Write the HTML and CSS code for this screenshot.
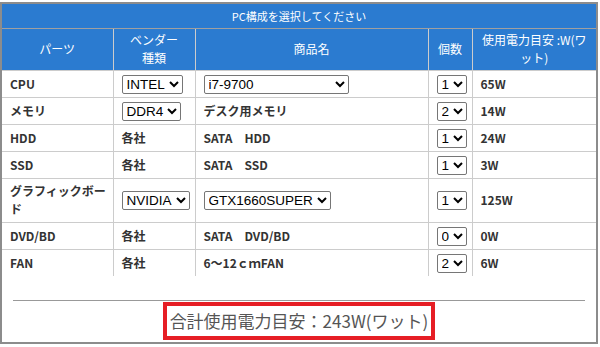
FILE: index.html
```html
<!DOCTYPE html>
<html lang="ja">
<head>
    <meta charset="UTF-8">
    <meta name="viewport" content="width=device-width, initial-scale=1.0">
    <title>PC構成</title>
    <link rel="stylesheet" href="styles.css">
</head>
<body>
    <div class="frame">
        <table class="parts">
            <colgroup>
                <col class="col-part">
                <col class="col-vendor">
                <col class="col-name">
                <col class="col-count">
                <col class="col-watt">
            </colgroup>
            <thead>
                <tr class="caption-row">
                    <th colspan="5" class="caption">PC構成を選択してください</th>
                </tr>
                <tr class="head">
                    <th>パーツ</th>
                    <th>ベンダー<br>種類</th>
                    <th>商品名</th>
                    <th>個数</th>
                    <th>使用電力目安 :W(ワット)</th>
                </tr>
            </thead>
            <tbody>
                <tr>
                    <td>CPU</td>
                    <td><select><option>INTEL</option><option>AMD</option></select></td>
                    <td><select class="sel-cpu"><option>i7-9700</option><option>i5-9400</option></select></td>
                    <td><select><option>1</option><option>2</option></select></td>
                    <td>65W</td>
                </tr>
                <tr>
                    <td>メモリ</td>
                    <td><select><option>DDR4</option><option>DDR3</option></select></td>
                    <td>デスク用メモリ</td>
                    <td><select><option>1</option><option selected>2</option></select></td>
                    <td>14W</td>
                </tr>
                <tr>
                    <td>HDD</td>
                    <td>各社</td>
                    <td>SATA　HDD</td>
                    <td><select><option>1</option><option>2</option></select></td>
                    <td>24W</td>
                </tr>
                <tr>
                    <td>SSD</td>
                    <td>各社</td>
                    <td>SATA　SSD</td>
                    <td><select><option>1</option><option>2</option></select></td>
                    <td>3W</td>
                </tr>
                <tr class="tall">
                    <td>グラフィックボード</td>
                    <td><select><option>NVIDIA</option><option>AMD</option></select></td>
                    <td><select class="sel-gpu"><option>GTX1660SUPER</option><option>RTX2060</option></select></td>
                    <td><select><option>1</option><option>2</option></select></td>
                    <td>125W</td>
                </tr>
                <tr>
                    <td>DVD/BD</td>
                    <td>各社</td>
                    <td>SATA　DVD/BD</td>
                    <td><select><option>0</option><option>1</option></select></td>
                    <td>0W</td>
                </tr>
                <tr>
                    <td>FAN</td>
                    <td>各社</td>
                    <td>6～12ｃｍFAN</td>
                    <td><select><option>1</option><option selected>2</option></select></td>
                    <td>6W</td>
                </tr>
            </tbody>
        </table>

        <hr class="rule">

        <div class="total">
            <span class="total-box">合計使用電力目安：243W(ワット)</span>
        </div>
    </div>
</body>
</html>
```

FILE: styles.css
```css
body {
    margin: 2px 0 0 0;
    padding: 0;
    background-color: #ffffff;
    font-family: "Noto Sans CJK JP", "Liberation Sans", sans-serif;
    color: #333;
}

.frame {
    width: 594px;
    height: 338px;
    border: 2px solid #8c8c8c;
    display: flex;
    flex-direction: column;
}

.parts {
    width: 594px;
    table-layout: fixed;
    border-collapse: collapse;
    border-style: hidden;
}

.col-part { width: 111px; }
.col-vendor { width: 82px; }
.col-name { width: 233px; }
.col-count { width: 44px; }
.col-watt { width: 124px; }

.parts th,
.parts td {
    border: 1px solid #cccccc;
}

.parts th {
    background-color: #2b7bd0;
    color: #ffffff;
    font-weight: normal;
    font-size: 12px;
    line-height: 18px;
    padding: 0 6px;
}

.parts th.caption {
    font-size: 11px;
    border-bottom-color: #a0a0a0;
}

.caption-row { height: 24px; }
.head { height: 42px; }
.parts tbody tr { height: 27px; }
.parts tbody tr.tall { height: 44px; }

.parts td {
    font-size: 12px;
    font-weight: bold;
    line-height: 18px;
    padding: 0 4px 0 8px;
}

.parts select {
    font-family: "Liberation Sans", Arial, sans-serif;
    font-size: 13.5px;
    height: 19px;
    padding: 0;
    color: #000;
    background-color: #fff;
    border: 1px solid #767676;
    border-radius: 2px;
    vertical-align: middle;
}

.sel-cpu { width: 145px; }
.sel-gpu { width: 127px; }

.rule {
    margin: 24px 11px 1px 11px;
    border: none;
    border-top: 1px solid #999;
}

.total {
    text-align: center;
}

.total-box {
    display: inline-block;
    border: 4px solid #e61e25;
    padding: 0 3px;
    font-size: 17px;
    line-height: 30px;
    color: #555;
}
```
